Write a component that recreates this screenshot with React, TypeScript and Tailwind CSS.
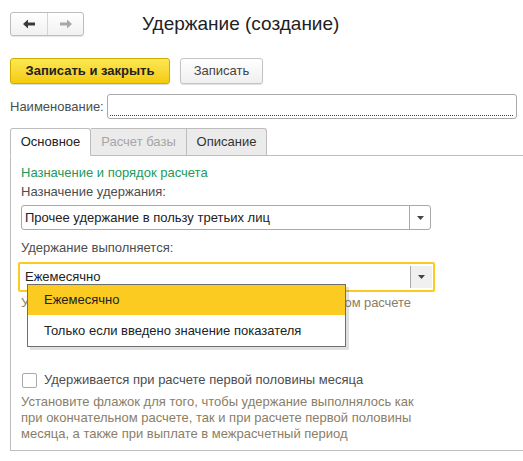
import { useState } from 'react'

const font = { fontFamily: '"Liberation Sans", Arial, sans-serif' }

function Arrow({ dir, color }: { dir: 'left' | 'right'; color: string }) {
  return (
    <svg width="14" height="10" viewBox="0 0 14 10">
      {dir === 'left' ? (
        <path d="M1 5 L6 0.5 V3.5 H13 V6.5 H6 V9.5 Z" fill={color} />
      ) : (
        <path d="M13 5 L8 0.5 V3.5 H1 V6.5 H8 V9.5 Z" fill={color} />
      )}
    </svg>
  )
}

function Caret() {
  return (
    <svg width="7" height="4" viewBox="0 0 7 4">
      <path d="M0 0 H7 L3.5 4 Z" fill="#444" />
    </svg>
  )
}

export default function App() {
  const [tab, setTab] = useState('main')
  const [checked, setChecked] = useState(false)

  return (
    <div className="relative w-[523px] h-[461px] bg-white text-[13px] text-[#333] overflow-hidden" style={font}>
      {/* header */}
      <div className="flex items-center pt-[12px] pl-[10px]">
        <div className="flex h-[24px] w-[74px] rounded-[3px] border border-[#bdbdbd] bg-gradient-to-b from-white to-[#f1f1f1] shadow-[0_1px_1px_rgba(0,0,0,0.1)]">
          <button className="flex w-[37px] items-center justify-center border-r border-[#d5d5d5]">
            <Arrow dir="left" color="#3a3a3a" />
          </button>
          <button className="flex flex-1 items-center justify-center">
            <Arrow dir="right" color="#a8a8a8" />
          </button>
        </div>
        <h1 className="ml-[58px] text-[19px] leading-[24px] text-[#222]">Удержание (создание)</h1>
      </div>

      {/* command bar */}
      <div className="mt-[22px] flex gap-[10px] pl-[10px]">
        <button className="h-[26px] w-[160px] rounded-[3px] border border-[#cfae00] bg-gradient-to-b from-[#fde74f] to-[#f4cb00] font-bold text-[#222] shadow-[0_1px_1px_rgba(0,0,0,0.15)]">
          Записать и закрыть
        </button>
        <button className="h-[26px] w-[83px] rounded-[3px] border border-[#c4c4c4] bg-gradient-to-b from-white to-[#efefef] text-[#444] shadow-[0_1px_1px_rgba(0,0,0,0.12)]">
          Записать
        </button>
      </div>

      {/* name */}
      <div className="mt-[10px] flex items-center pl-[10px] pr-[6px]">
        <span className="w-[97px] text-[#4d4d4d]">Наименование:</span>
        <div className="relative h-[25px] flex-1 rounded-[3px] border border-[#a9a9a9]">
          <div className="absolute bottom-[2px] left-[2px] right-[3px] border-b border-dotted border-[#e00000]" />
        </div>
      </div>

      {/* tabs */}
      <div className="mt-[9px] flex pl-[10px]">
        <button
          onClick={() => setTab('main')}
          className={`-mb-px h-[28px] w-[81px] rounded-t-[3px] border border-[#bdbdbd] ${tab === 'main' ? 'border-b-white bg-white text-[#222]' : 'bg-[#ebebeb] text-[#333]'}`}
        >
          Основное
        </button>
        <button className="h-[27px] w-[96px] border-t border-r border-[#bdbdbd] bg-[#ebebeb] text-[#a6a6a6]">
          Расчет базы
        </button>
        <button
          onClick={() => setTab('desc')}
          className="h-[27px] w-[80px] rounded-tr-[3px] border-t border-r border-[#bdbdbd] bg-[#ebebeb] text-[#333]"
        >
          Описание
        </button>
      </div>

      {/* panel */}
      <div className="ml-[10px] h-[296px] border-t border-l border-b border-[#bdbdbd] pt-[9px] pl-[10px]">
        <div className="leading-[16px] text-[#1a9a5c]">Назначение и порядок расчета</div>
        <div className="mt-[3px] leading-[16px] text-[#4d4d4d]">Назначение удержания:</div>
        <div className="mt-[5px] flex h-[25px] w-[410px] items-center rounded-[3px] border border-[#a9a9a9]">
          <span className="flex-1 pl-[3px] text-[#222]">Прочее удержание в пользу третьих лиц</span>
          <span className="flex h-full w-[21px] items-center justify-center border-l border-[#a9a9a9]">
            <Caret />
          </span>
        </div>
        <div className="mt-[10px] leading-[16px] text-[#4d4d4d]">Удержание выполняется:</div>
        <div className="mt-[6px] -ml-[3px] h-[30px] w-[417px] rounded-[2px] border-2 border-[#fccb1e] p-[1px]">
          <div className="flex h-full items-center">
            <span className="flex-1 pl-[4px] text-[#222]">Ежемесячно</span>
            <span className="flex h-[22px] w-[22px] items-center justify-center border-l border-[#a9a9a9] bg-[#f0f0f0]">
              <Caret />
            </span>
          </div>
        </div>
        <div className="mt-[3px] leading-[16px] tracking-[-0.1px] text-[#8a7e66] whitespace-nowrap">
          Удерживается ежемесячно или лишь при окончательном расчете
        </div>

        <label className="mt-[61px] flex items-center gap-[7px] leading-[16px]">
          <span
            onClick={() => setChecked(!checked)}
            className="ml-[1px] flex h-[15px] w-[15px] items-center justify-center rounded-[2px] border border-[#a9a9a9] bg-white"
          >
            {checked && <span className="text-[11px]">✓</span>}
          </span>
          <span className="text-[#4d4d4d]">Удерживается при расчете первой половины месяца</span>
        </label>
        <p className="mt-[6px] w-[400px] leading-[16px] text-[#8a7e66]">
          Установите флажок для того, чтобы удержание выполнялось как при окончательном расчете, так и при расчете первой половины месяца, а также при выплате в межрасчетный период
        </p>
      </div>

      {/* dropdown list */}
      <div className="absolute left-[27px] top-[284px] w-[319px] border border-[#6e6e6e] bg-white shadow-[3px_3px_0_rgba(0,0,0,0.12)]">
        <div className="flex h-[30px] items-center bg-[#fbcb21] pl-[16px] text-[#222]">Ежемесячно</div>
        <div className="flex h-[31px] items-center pl-[16px] text-[#222]">Только если введено значение показателя</div>
      </div>
    </div>
  )
}
